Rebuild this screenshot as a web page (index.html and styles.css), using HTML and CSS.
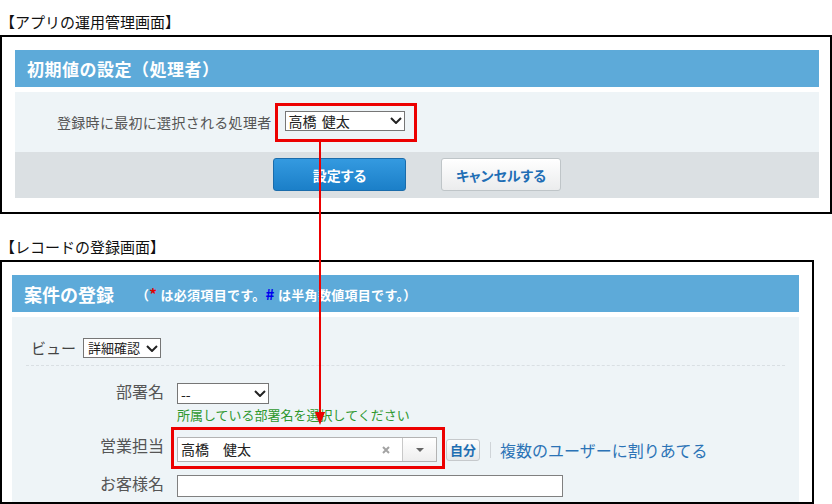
FILE: index.html
```html
<!DOCTYPE html>
<html lang="ja">
<head>
<meta charset="utf-8">
<title>初期値の設定</title>
<link rel="stylesheet" href="styles.css">
</head>
<body>
  <p class="caption">【アプリの運用管理画面】</p>
  <section class="frame frame-admin">
    <div class="panel">
      <h2 class="panel-head">初期値の設定（処理者）</h2>
      <div class="panel-body admin-body">
        <span class="admin-label">登録時に最初に選択される処理者</span>
        <div class="mark mark-admin">
          <div class="select select-assignee">
            <span>高橋 健太</span>
            <svg class="chev" width="12" height="7" viewBox="0 0 12 7"><path d="M1 1l5 5 5-5" /></svg>
          </div>
        </div>
      </div>
      <div class="panel-foot">
        <button class="btn btn-primary" type="button">設定する</button>
        <button class="btn btn-secondary" type="button">キャンセルする</button>
      </div>
    </div>
  </section>

  <p class="caption caption-record">【レコードの登録画面】</p>
  <section class="frame frame-record">
    <div class="panel panel-fill">
      <h2 class="panel-head panel-head-lg">案件の登録<span class="head-note">（<span class="req">*</span> は必須項目です。<span class="num">#</span> は半角数値項目です。）</span></h2>
      <div class="panel-body record-body">
        <div class="view-row">
          <span class="view-label">ビュー</span>
          <div class="select select-view">
            <span>詳細確認</span>
            <svg class="chev" width="12" height="7" viewBox="0 0 12 7"><path d="M1 1l5 5 5-5" /></svg>
          </div>
        </div>
        <div class="divider"></div>

        <div class="form-row">
          <span class="form-label">部署名</span>
          <div class="field">
            <div class="select select-dept">
              <span>--</span>
              <svg class="chev" width="12" height="7" viewBox="0 0 12 7"><path d="M1 1l5 5 5-5" /></svg>
            </div>
            <p class="hint">所属している部署名を選択してください</p>
          </div>
        </div>

        <div class="form-row row-owner">
          <span class="form-label">営業担当</span>
          <div class="field field-inline">
            <div class="mark mark-owner">
              <div class="combo">
                <span class="combo-value">高橋　健太</span>
                <span class="combo-clear"><svg width="8" height="8" viewBox="0 0 8 8"><path d="M1 1l6 6M7 1l-6 6" /></svg></span>
                <span class="combo-toggle"><span class="caret"></span></span>
              </div>
            </div>
            <button class="btn-self" type="button">自分</button>
            <span class="sep"></span>
            <a class="assign-link">複数のユーザーに割りあてる</a>
          </div>
        </div>

        <div class="form-row row-client">
          <span class="form-label">お客様名</span>
          <div class="field">
            <div class="text-input"></div>
          </div>
        </div>
      </div>
    </div>
  </section>

  <svg class="connector" width="12" height="286" viewBox="0 0 12 286">
    <line x1="6" y1="0" x2="6" y2="272" />
    <polygon points="1,270 11,270 6,283" />
  </svg>
</body>
</html>
```

FILE: styles.css
```css
* {
  box-sizing: border-box;
}

html,
body {
  margin: 0;
}

body {
  position: relative;
  width: 832px;
  height: 504px;
  overflow: hidden;
  background: #fff;
  color: #333;
  font-family: "Noto Sans CJK JP", "Noto Sans", sans-serif;
}

/* captions above each frame */
.caption {
  margin: 0;
  padding-top: 12px;
  font-size: 15px;
  line-height: 20px;
  color: #111;
}

.caption-record {
  padding-top: 23px;
}

/* black outline around each screen */
.frame {
  margin-top: 3px;
  border: 2px solid #000;
}

.frame-admin {
  width: 832px;
  padding: 13px 11px 14px 13px;
}

.frame-record {
  display: flex;
  flex-direction: column;
  width: 814px;
  height: 244px;
  padding: 13px 13px 0 10px;
  overflow: hidden;
}

/* panels */
.panel-fill {
  flex: 1;
  display: flex;
  flex-direction: column;
}

.panel-head {
  display: flex;
  align-items: center;
  height: 37px;
  margin: 0;
  padding-left: 12px;
  background: #5daad9;
  color: #fff;
  font-size: 17px;
  font-weight: 700;
  letter-spacing: 0.5px;
}

.panel-head-lg {
  font-size: 18px;
  letter-spacing: 0;
}

.head-note {
  margin-left: 22px;
  font-size: 13px;
  font-weight: 700;
  letter-spacing: 0.3px;
}

.req,
.num {
  font-size: 15px;
}

.req {
  color: #e00000;
}

.num {
  color: #0000f0;
}

.panel-body {
  margin-top: 5px;
  background: #eef4f7;
}

.admin-body {
  display: flex;
  align-items: center;
  height: 60px;
  padding-left: 42px;
}

.admin-label {
  margin-right: 3px;
  font-size: 14px;
  letter-spacing: 0.3px;
  color: #555;
}

.panel-foot {
  display: flex;
  justify-content: center;
  gap: 35px;
  height: 46px;
  padding-top: 6px;
  background: #dbe0e3;
}

/* red highlight frames */
.mark {
  border: 3px solid #ec0000;
}

.mark-admin {
  padding: 5px 9px 8px 7px;
}

.mark-owner {
  margin: -10px 0 -7px -6px;
  padding: 7px 5px 4px 3px;
}

/* select boxes */
.select {
  display: flex;
  align-items: center;
  justify-content: space-between;
  background: #fff;
  border: 1px solid #767676;
  padding: 0 2px 0 3px;
  font-size: 14px;
  line-height: 18px;
  color: #222;
}

.select-assignee span {
  word-spacing: 2px;
}

.chev {
  flex: none;
}

.chev path {
  fill: none;
  stroke: #222;
  stroke-width: 2;
}

.select-assignee {
  width: 120px;
  height: 20px;
}

.select-view {
  width: 78px;
  height: 20px;
  padding-left: 4px;
  font-size: 13px;
}

.select-dept {
  width: 92px;
  height: 21px;
}

/* buttons */
.btn {
  height: 33px;
  border-radius: 3px;
  font-family: inherit;
  font-size: 14px;
  font-weight: 700;
  font-feature-settings: "palt";
  cursor: pointer;
}

.btn-primary {
  width: 133px;
  border: 1px solid #1a6cab;
  background: linear-gradient(#349ae0, #1b7fc8);
  color: #fff;
}

.btn-secondary {
  width: 120px;
  border: 1px solid #bfc5c8;
  background: linear-gradient(#ffffff, #ebeced);
  color: #1f6eb5;
}

/* record form */
.record-body {
  flex: 1;
  padding-top: 21px;
}

.view-row {
  display: flex;
  align-items: center;
  gap: 7px;
  height: 20px;
  padding-left: 19px;
}

.view-label {
  font-size: 15px;
  line-height: 20px;
  color: #444;
}

.divider {
  margin: 7px 14px 0;
  border-top: 1px dashed #d9dfe3;
}

.form-row {
  display: flex;
  align-items: flex-start;
  margin-top: 17px;
}

.row-owner {
  margin-top: 14px;
}

.row-client {
  margin-top: 13px;
}

.form-label {
  flex: none;
  width: 152px;
  margin: -2px 13px 0 0;
  text-align: right;
  font-size: 16px;
  line-height: 20px;
  color: #555;
}

.hint {
  margin: 2px 0 0;
  font-size: 13px;
  line-height: 17px;
  color: #2f982f;
}

.field-inline {
  display: flex;
  align-items: center;
}

/* user picker */
.combo {
  display: flex;
  width: 260px;
  height: 25px;
  border: 1px solid #b3b3b3;
  background: #fff;
}

.combo-value {
  flex: 1;
  padding-left: 3px;
  font-size: 14px;
  line-height: 23px;
  color: #222;
}

.combo-clear {
  display: flex;
  align-items: center;
  justify-content: center;
  width: 32px;
}

.combo-clear path {
  stroke: #a3a3a3;
  stroke-width: 2;
}

.combo-toggle {
  display: flex;
  align-items: center;
  justify-content: center;
  width: 34px;
  border-left: 1px solid #c8c8c8;
  background: linear-gradient(#ffffff, #eeeeee);
}

.caret {
  width: 0;
  height: 0;
  border-left: 4px solid transparent;
  border-right: 4px solid transparent;
  border-top: 4px solid #666;
}

.btn-self {
  height: 22px;
  margin-left: 1px;
  padding: 0 3px;
  border: 1px solid #c6c9cc;
  border-radius: 3px;
  background: linear-gradient(#fdfdfd, #e6e8ea);
  color: #1f6eb2;
  font-family: inherit;
  font-size: 13px;
  font-weight: 700;
  line-height: 20px;
}

.sep {
  width: 1px;
  height: 16px;
  margin: 0 9px 0 10px;
  background: #cfd4d8;
}

.assign-link {
  font-size: 16px;
  color: #2b73b6;
  cursor: pointer;
}

.text-input {
  width: 386px;
  height: 22px;
  border: 1px solid #808080;
  background: #fff;
}

/* red arrow from the admin setting down to the record field */
.connector {
  position: absolute;
  left: 314px;
  top: 142px;
  pointer-events: none;
}

.connector line {
  stroke: #ec0000;
  stroke-width: 2;
}

.connector polygon {
  fill: #ec0000;
}
```
